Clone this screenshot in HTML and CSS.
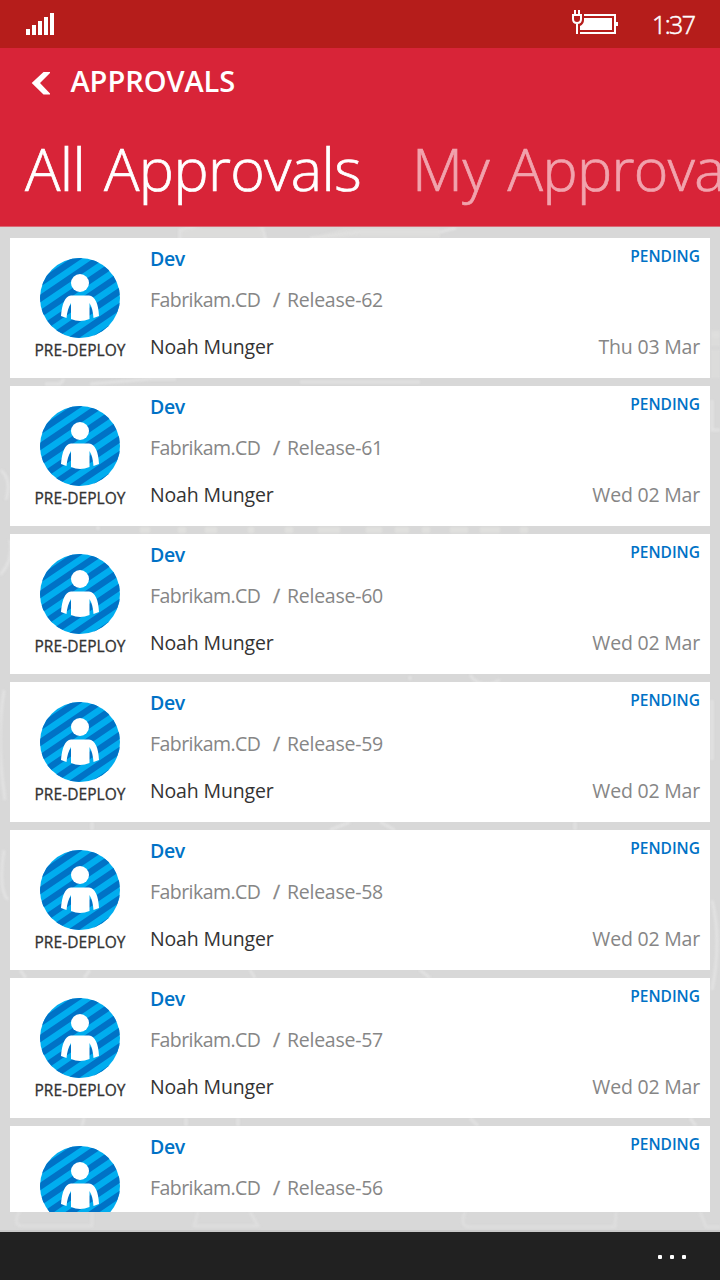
FILE: index.html
```html
<!DOCTYPE html>
<html lang="en">
<head>
<meta charset="utf-8">
<title>Approvals</title>
<link rel="stylesheet" href="styles.css">
</head>
<body>
<svg class="defs" width="0" height="0" aria-hidden="true">
  <defs>
    <clipPath id="disc"><circle cx="40" cy="40" r="40"/></clipPath>
    <symbol id="person" viewBox="0 0 80 80">
      <g clip-path="url(#disc)">
        <rect width="80" height="80" fill="#00adef"/>
        <path d="M-10 16.500L90 -51.500M-10 32L90 -36M-10 47.500L90 -20.500M-10 63L90 -5M-10 78.500L90 10.500M-10 94L90 26M-10 109.500L90 41.500M-10 125L90 57" stroke="#0072c6" stroke-width="6.4"/>
      </g>
      <circle cx="40" cy="25" r="9" fill="#fff"/>
      <path d="M31 37.500H49C55 38 58.500 46 59 58L53.500 60C53 54 52 49 49.500 45V61Q40 65 31 61V45C28.500 49 27 54 26.500 60L21 58C22 46 25 38 31 37.500Z" fill="#fff"/>
    </symbol>
  </defs>
</svg>
<div class="phone">
  <svg class="doodles" width="720" height="1006" viewBox="0 226 720 1006" aria-hidden="true">
    <g fill="none" stroke="#e2e2e2" stroke-width="3">
      <path d="M180 245V230Q225 215 262 226L267 245M310 238L360 232H440L456 228M712 335H720M45 384H60L64 379M90 384L150 379H176M300 382H420M1 470Q12 480 6 500M0 575Q14 560 10 540M712 400V430H720M98 530V526M410 680V676M470 675Q480 690 500 680M4 690Q-4 740 5 800M92 822V830M330 830L350 822M380 822L395 830M575 822V830M712 700V760M4 850Q-2 890 8 900M20 970L26 978M90 970L84 978M250 970L255 978M420 970L430 978M712 900Q722 940 712 990M84 1118L82 1126M186 1118V1126M238 1118V1126M470 1118L478 1126M690 1118L696 1126"/>
      <path d="M20 1210Q12 1226 22 1226H92V1212M198 1212L194 1226H258L250 1212M465 1212Q459 1227 470 1227H615L616 1212M700 1212L706 1227H720" stroke="#dedede"/>
    </g>
    <g fill="#e0e0de">
      <path d="M182 228H264V238H182ZM345 228H440V238H310ZM711 330H720V346H711ZM711 350H720V378H711Z" opacity=".6"/>
      <path d="M140 527h10v6h-10zM178 527h8v6h-8zM205 527h12v6h-12zM248 527h6v6h-6zM285 527h8v6h-8zM318 527h22v6h-22zM366 527h16v6h-16zM395 527h14v6h-14zM422 527h8v6h-8zM450 527h18v6h-18zM480 527h20v6h-20zM520 527h8v6h-8z"/>
    </g>
  </svg>
  <div class="status">
    <svg class="signal" width="28" height="22" viewBox="0 0 28 22" fill="#fff"><path d="M0 16h4v6H0zM6 12h4v10H6zM12 8h4v14h-4zM18 4h4v18h-4zM24 0h4v22h-4z"/></svg>
    <svg class="battery" width="48" height="26" viewBox="0 0 48 26"><path d="M12 5H43V23H8" fill="none" stroke="#fff" stroke-width="2"/><path d="M44 12h2v4H44zM12 8H40V20H8V16Q12 14 12 10Z" fill="#fff"/><path d="M3 0V4M7 0V4M1 5H9V9Q9 13 5 13T1 9ZM5 13V24" fill="none" stroke="#fff" stroke-width="2"/></svg>
    <span class="clock">1:37</span>
  </div>
  <header class="header">
    <div class="crumb">
      <svg width="20" height="24" viewBox="0 0 20 24"><path d="M13.500 1H21L10 12L21 23.500H13.500L1.700 12Z" fill="#fff"/></svg>
      <span class="crumb-title">APPROVALS</span>
    </div>
    <div class="pivots"><span class="pivot">All Approvals</span><span class="pivot pivot-next">My Approvals</span></div>
  </header>
  <main class="list" id="list"></main>
  <footer class="appbar"><i></i><i></i><i></i></footer>
</div>
<script src="app.js"></script>
</body>
</html>
```
FILE: app.js
```js
const approvals = [
  [62, 'Thu 03 Mar'], [61, 'Wed 02 Mar'], [60, 'Wed 02 Mar'], [59, 'Wed 02 Mar'],
  [58, 'Wed 02 Mar'], [57, 'Wed 02 Mar'], [56, 'Wed 02 Mar']
];

document.getElementById('list').innerHTML = approvals.map(([id, date]) => `
  <article class="card">
    <div class="stage">
      <svg width="80" height="80"><use href="#person"/></svg>
      <span class="stage-name">PRE-DEPLOY</span>
    </div>
    <div class="info">
      <div class="row row-top"><span class="env">Dev</span><span class="state">PENDING</span></div>
      <div class="row row-release"><span class="project">Fabrikam.CD</span><span class="slash">/</span><span class="release">Release-${id}</span></div>
      <div class="row row-bottom"><span class="person">Noah Munger</span><span class="date">${date}</span></div>
    </div>
  </article>`).join('');
```
FILE: styles.css
```css
* { box-sizing: border-box; }
body { margin: 0; font-family: "Open Sans", "Noto Sans", sans-serif; }
.defs { position: absolute; }
.phone { position: relative; isolation: isolate; width: 720px; height: 1280px; display: flex; flex-direction: column; overflow: hidden; background: #d8d8d8; }
.doodles { position: absolute; left: 0; top: 226px; z-index: -1; filter: blur(1px); }
.status { flex: none; height: 48px; background: #b51d1b; display: flex; align-items: flex-start; color: #fff; padding-left: 26px; }
.signal { margin-top: 13px; }
.battery { margin: 10px 0 0 518px; }
.clock { margin: 7px 0 0 32px; font-size: 25px; line-height: 34px; letter-spacing: -1.6px; font-weight: 300; -webkit-text-stroke: 0.5px #fff; }
.header { flex: none; height: 179px; background: #d82438; border-bottom: 1px solid #da6874; color: #fff; }
.crumb { display: flex; height: 84px; padding: 23px 0 0 30px; }
.crumb-title { margin-left: 20.500px; margin-top: -10px; font-size: 29px; line-height: 40px; font-weight: 600; letter-spacing: -0.05px; }
.pivots { display: flex; gap: 51px; margin-top: -4px; padding-left: 25px; white-space: nowrap; font-size: 59px; line-height: 80px; font-weight: 300; letter-spacing: -0.6px; word-spacing: 4px; -webkit-text-stroke: 0.7px; }
.pivot-next { color: #f1a3ad; }
.list { flex: none; height: 985px; padding: 11px 10px 0; display: flex; flex-direction: column; gap: 8px; overflow: hidden; }
.card { flex: none; height: 140px; background: #fff; display: flex; }
.stage { width: 140px; padding-top: 20px; display: flex; flex-direction: column; align-items: center; }
.stage svg { flex: none; }
.stage-name { font-size: 15.500px; line-height: 20px; margin-top: 2px; letter-spacing: 0.05px; color: #333; white-space: nowrap; -webkit-text-stroke: 0.3px; }
.info { flex: 1; padding-right: 10px; font-size: 19.500px; line-height: 28px; }
.row { display: flex; white-space: nowrap; }
.row-top { justify-content: space-between; padding-top: 7px; color: #0072c6; }
.env { font-weight: 600; letter-spacing: -0.4px; }
.state { font-size: 15.500px; line-height: 24px; margin-top: -1px; font-weight: 600; }
.row-release { margin-top: 13px; color: #868686; }
.project { width: 111px; letter-spacing: -0.55px; }
.slash { margin-left: 12px; width: 8px; -webkit-text-stroke: 0.3px; }
.release { margin-left: 6px; letter-spacing: -0.25px; }
.row-bottom { margin-top: 19px; justify-content: space-between; color: #333; }
.person { letter-spacing: -0.15px; }
.date { color: #868686; letter-spacing: -0.2px; }
.appbar { flex: none; position: relative; margin-top: 20px; height: 48px; background: #212121; display: flex; justify-content: flex-end; gap: 8px; padding: 23px 34px 0 0; box-shadow: 0 -2px #c9c9c9; }
.appbar i { width: 4px; height: 4px; border-radius: 1px; background: #fff; }
```
